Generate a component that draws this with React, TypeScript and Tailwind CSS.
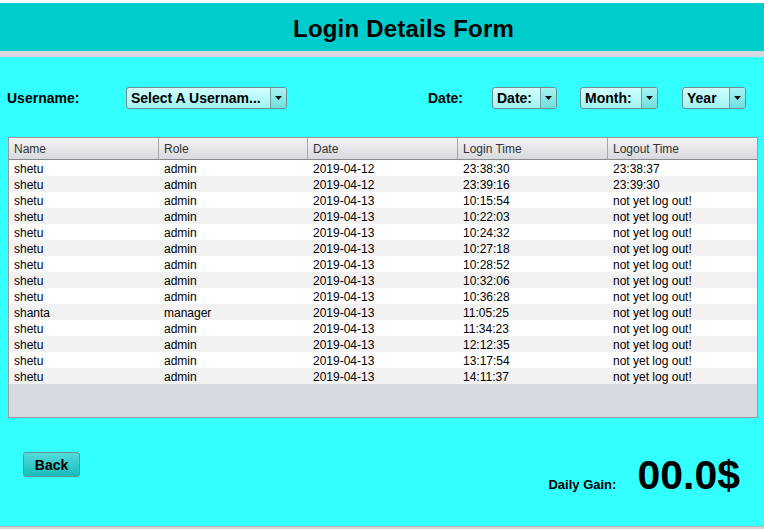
import React from 'react';

type Row = {
  name: string;
  role: string;
  date: string;
  login: string;
  logout: string;
};

const rows: Row[] = [
  { name: 'shetu', role: 'admin', date: '2019-04-12', login: '23:38:30', logout: '23:38:37' },
  { name: 'shetu', role: 'admin', date: '2019-04-12', login: '23:39:16', logout: '23:39:30' },
  { name: 'shetu', role: 'admin', date: '2019-04-13', login: '10:15:54', logout: 'not yet log out!' },
  { name: 'shetu', role: 'admin', date: '2019-04-13', login: '10:22:03', logout: 'not yet log out!' },
  { name: 'shetu', role: 'admin', date: '2019-04-13', login: '10:24:32', logout: 'not yet log out!' },
  { name: 'shetu', role: 'admin', date: '2019-04-13', login: '10:27:18', logout: 'not yet log out!' },
  { name: 'shetu', role: 'admin', date: '2019-04-13', login: '10:28:52', logout: 'not yet log out!' },
  { name: 'shetu', role: 'admin', date: '2019-04-13', login: '10:32:06', logout: 'not yet log out!' },
  { name: 'shetu', role: 'admin', date: '2019-04-13', login: '10:36:28', logout: 'not yet log out!' },
  { name: 'shanta', role: 'manager', date: '2019-04-13', login: '11:05:25', logout: 'not yet log out!' },
  { name: 'shetu', role: 'admin', date: '2019-04-13', login: '11:34:23', logout: 'not yet log out!' },
  { name: 'shetu', role: 'admin', date: '2019-04-13', login: '12:12:35', logout: 'not yet log out!' },
  { name: 'shetu', role: 'admin', date: '2019-04-13', login: '13:17:54', logout: 'not yet log out!' },
  { name: 'shetu', role: 'admin', date: '2019-04-13', login: '14:11:37', logout: 'not yet log out!' },
];

const columns = ['Name', 'Role', 'Date', 'Login Time', 'Logout Time'];
const gridCols = 'grid grid-cols-[150px_149px_150px_150px_1fr]';

const Combo = ({ label, width }: { label: string; width: string }) => (
  <div
    className={`${width} h-[22px] flex border border-[#6f8f8f] rounded-[3px] bg-gradient-to-b from-[#d2ffff] to-[#9ff3f3] overflow-hidden`}
  >
    <div className="flex-1 flex items-center pl-[4px] text-[14px] font-bold text-black leading-none whitespace-nowrap">
      {label}
    </div>
    <div className="w-[16px] flex items-center justify-center border-l border-[#6f9f9f] bg-gradient-to-b from-[#a8f4f4] to-[#6ddede]">
      <svg width="7" height="4" viewBox="0 0 7 4">
        <path d="M0 0 H7 L3.5 4 Z" fill="#111" />
      </svg>
    </div>
  </div>
);

const App = () => {
  return (
    <div className="w-[764px] h-[529px] bg-white flex flex-col overflow-hidden font-['Liberation_Sans',Arial,sans-serif]">
      <div className="h-[3px]" />
      <div className="h-[48px] bg-[#00cccc] flex items-center justify-center pl-[43px] pt-[4px]">
        <h1 className="text-[24px] font-bold text-black leading-none tracking-[0.2px]">Login Details Form</h1>
      </div>
      <div className="h-[6px] bg-[#d6d9df]" />

      <div className="flex-1 bg-[#33ffff] flex flex-col">
        <div className="flex items-center h-[22px] mt-[30px]">
          <span className="ml-[7px] w-[119px] text-[14px] font-bold text-black">Username:</span>
          <Combo label="Select A Usernam..." width="w-[161px]" />
          <span className="ml-[141px] w-[64px] text-[14px] font-bold text-black">Date:</span>
          <Combo label="Date:" width="w-[65px]" />
          <div className="w-[23px]" />
          <Combo label="Month:" width="w-[78px]" />
          <div className="w-[24px]" />
          <Combo label="Year" width="w-[64px]" />
        </div>

        <div className="ml-[8px] mt-[28px] w-[750px] h-[281px] border border-[#9a9a9a] bg-[#d6d9df] flex flex-col text-[12px]">
          <div className={`${gridCols} h-[22px] border-b border-[#8a8a8a] bg-gradient-to-b from-[#f4f4f6] to-[#d8d9de] text-[#333]`}>
            {columns.map((c, i) => (
              <div
                key={c}
                className={`flex items-center pl-[5px] pt-[1px] ${i < columns.length - 1 ? 'border-r border-[#a8a8a8]' : ''}`}
              >
                {c}
              </div>
            ))}
          </div>
          {rows.map((r, i) => (
            <div
              key={i}
              className={`${gridCols} h-[16px] leading-[16px] text-black ${i % 2 === 0 ? 'bg-white' : 'bg-[#f2f2f2]'}`}
            >
              <div className="pl-[5px] pt-[1px]">{r.name}</div>
              <div className="pl-[5px] pt-[1px]">{r.role}</div>
              <div className="pl-[5px] pt-[1px]">{r.date}</div>
              <div className="pl-[5px] pt-[1px]">{r.login}</div>
              <div className="pl-[5px] pt-[1px]">{r.logout}</div>
            </div>
          ))}
        </div>

        <div className="flex justify-between items-start mt-[34px]">
          <button className="ml-[23px] w-[57px] h-[25px] rounded-[3px] border border-[#6f8f8f] bg-gradient-to-b from-[#4fdcdc] to-[#12bcbc] text-[14px] font-bold text-black leading-none">
            Back
          </button>
          <div className="flex items-baseline mr-[24px] mt-[3px]">
            <span className="text-[13px] font-bold text-black mr-[21px]">Daily Gain:</span>
            <span className="text-[41px] font-bold text-black leading-none">00.0$</span>
          </div>
        </div>
      </div>
      <div className="h-[3px] bg-[#d4d4d4] border-t border-[#b8b8b8]" />
    </div>
  );
};

export default App;
